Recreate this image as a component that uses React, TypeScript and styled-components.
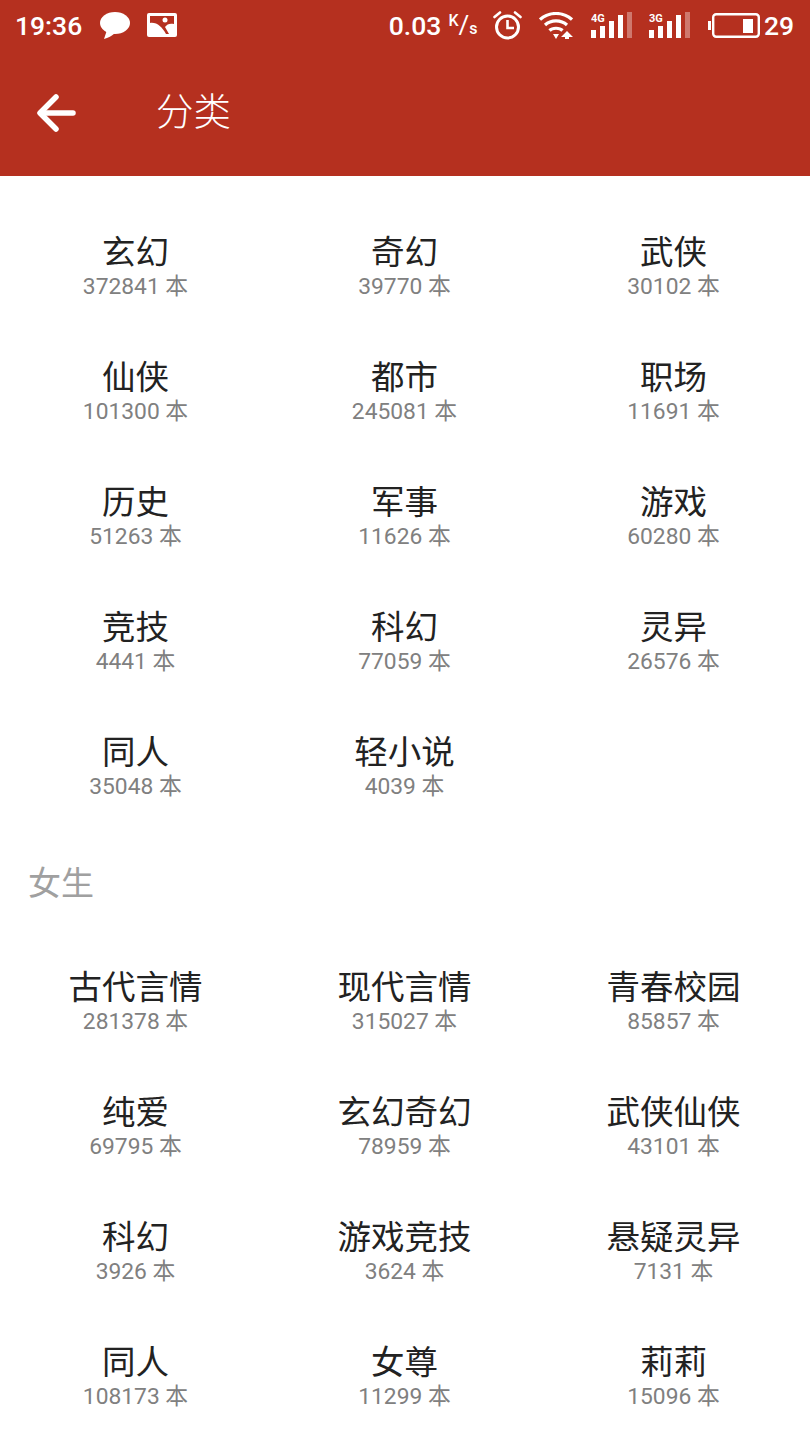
import React from 'react';
import styled, { createGlobalStyle } from 'styled-components';

const GlobalStyle = createGlobalStyle`
  html, body {
    margin: 0;
    padding: 0;
    background: #fff;
  }
`;

const red = '#b5301f';
const cjk = `Roboto, "Noto Sans CJK SC", "Noto Sans", sans-serif`;

type Category = { name: string; count: number };

const male: Category[] = [
  { name: '玄幻', count: 372841 },
  { name: '奇幻', count: 39770 },
  { name: '武侠', count: 30102 },
  { name: '仙侠', count: 101300 },
  { name: '都市', count: 245081 },
  { name: '职场', count: 11691 },
  { name: '历史', count: 51263 },
  { name: '军事', count: 11626 },
  { name: '游戏', count: 60280 },
  { name: '竞技', count: 4441 },
  { name: '科幻', count: 77059 },
  { name: '灵异', count: 26576 },
  { name: '同人', count: 35048 },
  { name: '轻小说', count: 4039 },
];

const female: Category[] = [
  { name: '古代言情', count: 281378 },
  { name: '现代言情', count: 315027 },
  { name: '青春校园', count: 85857 },
  { name: '纯爱', count: 69795 },
  { name: '玄幻奇幻', count: 78959 },
  { name: '武侠仙侠', count: 43101 },
  { name: '科幻', count: 3926 },
  { name: '游戏竞技', count: 3624 },
  { name: '悬疑灵异', count: 7131 },
  { name: '同人', count: 108173 },
  { name: '女尊', count: 11299 },
  { name: '莉莉', count: 15096 },
];

const Page = styled.div`
  width: 810px;
  height: 1440px;
  overflow: hidden;
  background: #fff;
  font-family: ${cjk};
`;

const Header = styled.header`
  height: 176px;
  background: ${red};
  color: #fff;
`;

const StatusBar = styled.div`
  height: 50px;
  display: flex;
  align-items: center;
  padding: 0 16px 0 15px;
  box-sizing: border-box;
  font-size: 26.5px;
  font-weight: 500;
`;

const StatusGroup = styled.div`
  display: flex;
  align-items: center;
  gap: 17.5px;
`;

const Spacer = styled.div`
  flex: 1;
`;

const Speed = styled.span`
  display: flex;
  align-items: center;
  gap: 7px;
`;

const SpeedUnit = styled.span`
  display: flex;
  height: 24px;
  width: 27px;
  justify-content: space-between;
  font-size: 16px;
  line-height: 16px;
`;

const UnitPart = styled.span<{ $low?: boolean }>`
  align-self: ${(p) => (p.$low ? 'flex-end' : 'flex-start')};
`;

const Slash = styled.span`
  font-size: 26px;
  line-height: 24px;
  font-weight: 400;
`;

const BatteryGroup = styled.div`
  display: flex;
  align-items: center;
  gap: 4px;
`;

const Toolbar = styled.div`
  height: 126px;
  display: flex;
  align-items: center;
  padding-left: 36px;
  box-sizing: border-box;
`;

const Title = styled.h1`
  margin: 0 0 0 78px;
  font-size: 37.5px;
  font-weight: 300;
  line-height: 1;
`;

const Grid = styled.div<{ $top: number }>`
  display: grid;
  grid-template-columns: repeat(3, 269px);
  grid-auto-rows: 125px;
  padding-top: ${(p) => p.$top}px;
  padding-left: 1px;
`;

const Cell = styled.div`
  display: flex;
  flex-direction: column;
  align-items: center;
`;

const Name = styled.div`
  height: 40px;
  font-size: 33.5px;
  line-height: 40px;
  color: #222;
`;

const Count = styled.div`
  height: 28px;
  font-size: 22.8px;
  line-height: 28px;
  color: #808080;
`;

const SectionTitle = styled.h2`
  margin: 6px 0 0;
  padding: 0 0 0 28px;
  height: 40px;
  font-size: 33px;
  line-height: 40px;
  font-weight: 400;
  color: #a0a0a0;
`;

const MessageIcon = () => (
  <svg width="30" height="27" viewBox="0 0 30 27">
    <ellipse cx="15" cy="11" rx="15" ry="11" fill="#fff" />
    <path d="M7 18 L4 27 C8 26 12 24 15 21 Z" fill="#fff" />
  </svg>
);

const PictureIcon = () => (
  <svg width="30" height="24" viewBox="0 0 30 24">
    <rect width="30" height="24" rx="2" fill="#fff" />
    <path d="M3 3 H27 V11 C23 10 20 11 18 14 L22 21 H19 C15 14 10 9 3 10 Z" fill={red} />
    <circle cx="18" cy="7" r="2.5" fill="#fff" />
  </svg>
);

const AlarmIcon = () => (
  <svg width="29" height="29" viewBox="0 0 29 29" fill="none" stroke="#fff">
    <circle cx="14.5" cy="16" r="11" strokeWidth="3" />
    <path d="M14.5 9 V17 H21" strokeWidth="2.6" />
    <path d="M1.5 6 L7 1.5 M27.5 6 L22 1.5" strokeWidth="2.6" strokeLinecap="round" />
  </svg>
);

const WifiIcon = () => (
  <svg width="34" height="27" viewBox="0 0 34 27" fill="none">
    <path d="M1 7.5 C10 -0.5 24 -0.5 33 7.5" stroke="#fff" strokeWidth="3.2" />
    <path d="M6 13 C12 7.5 22 7.5 28 13" stroke="#fff" strokeWidth="3.2" />
    <path d="M10.5 18.5 C13.5 15.5 20.5 15.5 23.5 18.5" stroke="#fff" strokeWidth="3.2" />
    <path d="M14 22 H20 L17 27 Z" fill="#fff" />
    <path d="M22 25 L28 19 L34 25 H30 V27 H26 V25 Z" fill="#fff" />
  </svg>
);

const SignalIcon = ({ label }: { label: string }) => (
  <svg width="41" height="26" viewBox="0 0 41 26">
    <text x="0" y="9.5" fontSize="11" fontWeight="700" fill="#fff" fontFamily="Roboto, sans-serif">
      {label}
    </text>
    <rect x="0" y="18" width="5" height="8" fill="#fff" />
    <rect x="9" y="14" width="5" height="12" fill="#fff" />
    <rect x="18" y="9" width="5" height="17" fill="#fff" />
    <rect x="27" y="3" width="5" height="23" fill="#fff" />
    <rect x="36" y="0" width="5" height="26" fill="#fff" fillOpacity="0.35" />
  </svg>
);

const BatteryIcon = () => (
  <svg width="52" height="25" viewBox="0 0 52 25">
    <rect x="0" y="8" width="3" height="9" fill="#fff" />
    <rect x="5.2" y="1.2" width="45.6" height="22.6" rx="3" fill="none" stroke="#fff" strokeWidth="2.4" />
    <rect x="35" y="6" width="10" height="14" fill="#fff" />
  </svg>
);

const BackArrow = () => (
  <svg width="42" height="40" viewBox="0 0 42 40" fill="none" stroke="#fff" strokeWidth="5.5" strokeLinecap="round" strokeLinejoin="round">
    <path d="M37 20 H5" />
    <path d="M20 4 L4 20 L20 36" />
  </svg>
);

const CategoryGrid = ({ items, top }: { items: Category[]; top: number }) => (
  <Grid $top={top}>
    {items.map((c) => (
      <Cell key={c.name + c.count}>
        <Name>{c.name}</Name>
        <Count>{c.count} 本</Count>
      </Cell>
    ))}
  </Grid>
);

const App: React.FC = () => {
  return (
    <Page>
      <GlobalStyle />
      <Header>
        <StatusBar>
          <StatusGroup>
            <span>19:36</span>
            <MessageIcon />
            <PictureIcon />
          </StatusGroup>
          <Spacer />
          <StatusGroup>
            <Speed>
              0.03
              <SpeedUnit>
                <UnitPart>K</UnitPart>
                <Slash>/</Slash>
                <UnitPart $low>s</UnitPart>
              </SpeedUnit>
            </Speed>
            <AlarmIcon />
            <WifiIcon />
            <SignalIcon label="4G" />
            <SignalIcon label="3G" />
            <BatteryGroup>
              <BatteryIcon />
              <span>29</span>
            </BatteryGroup>
          </StatusGroup>
        </StatusBar>
        <Toolbar>
          <BackArrow />
          <Title>分类</Title>
        </Toolbar>
      </Header>
      <CategoryGrid items={male} top={57} />
      <SectionTitle>女生</SectionTitle>
      <CategoryGrid items={female} top={64} />
    </Page>
  );
};

export default App;
